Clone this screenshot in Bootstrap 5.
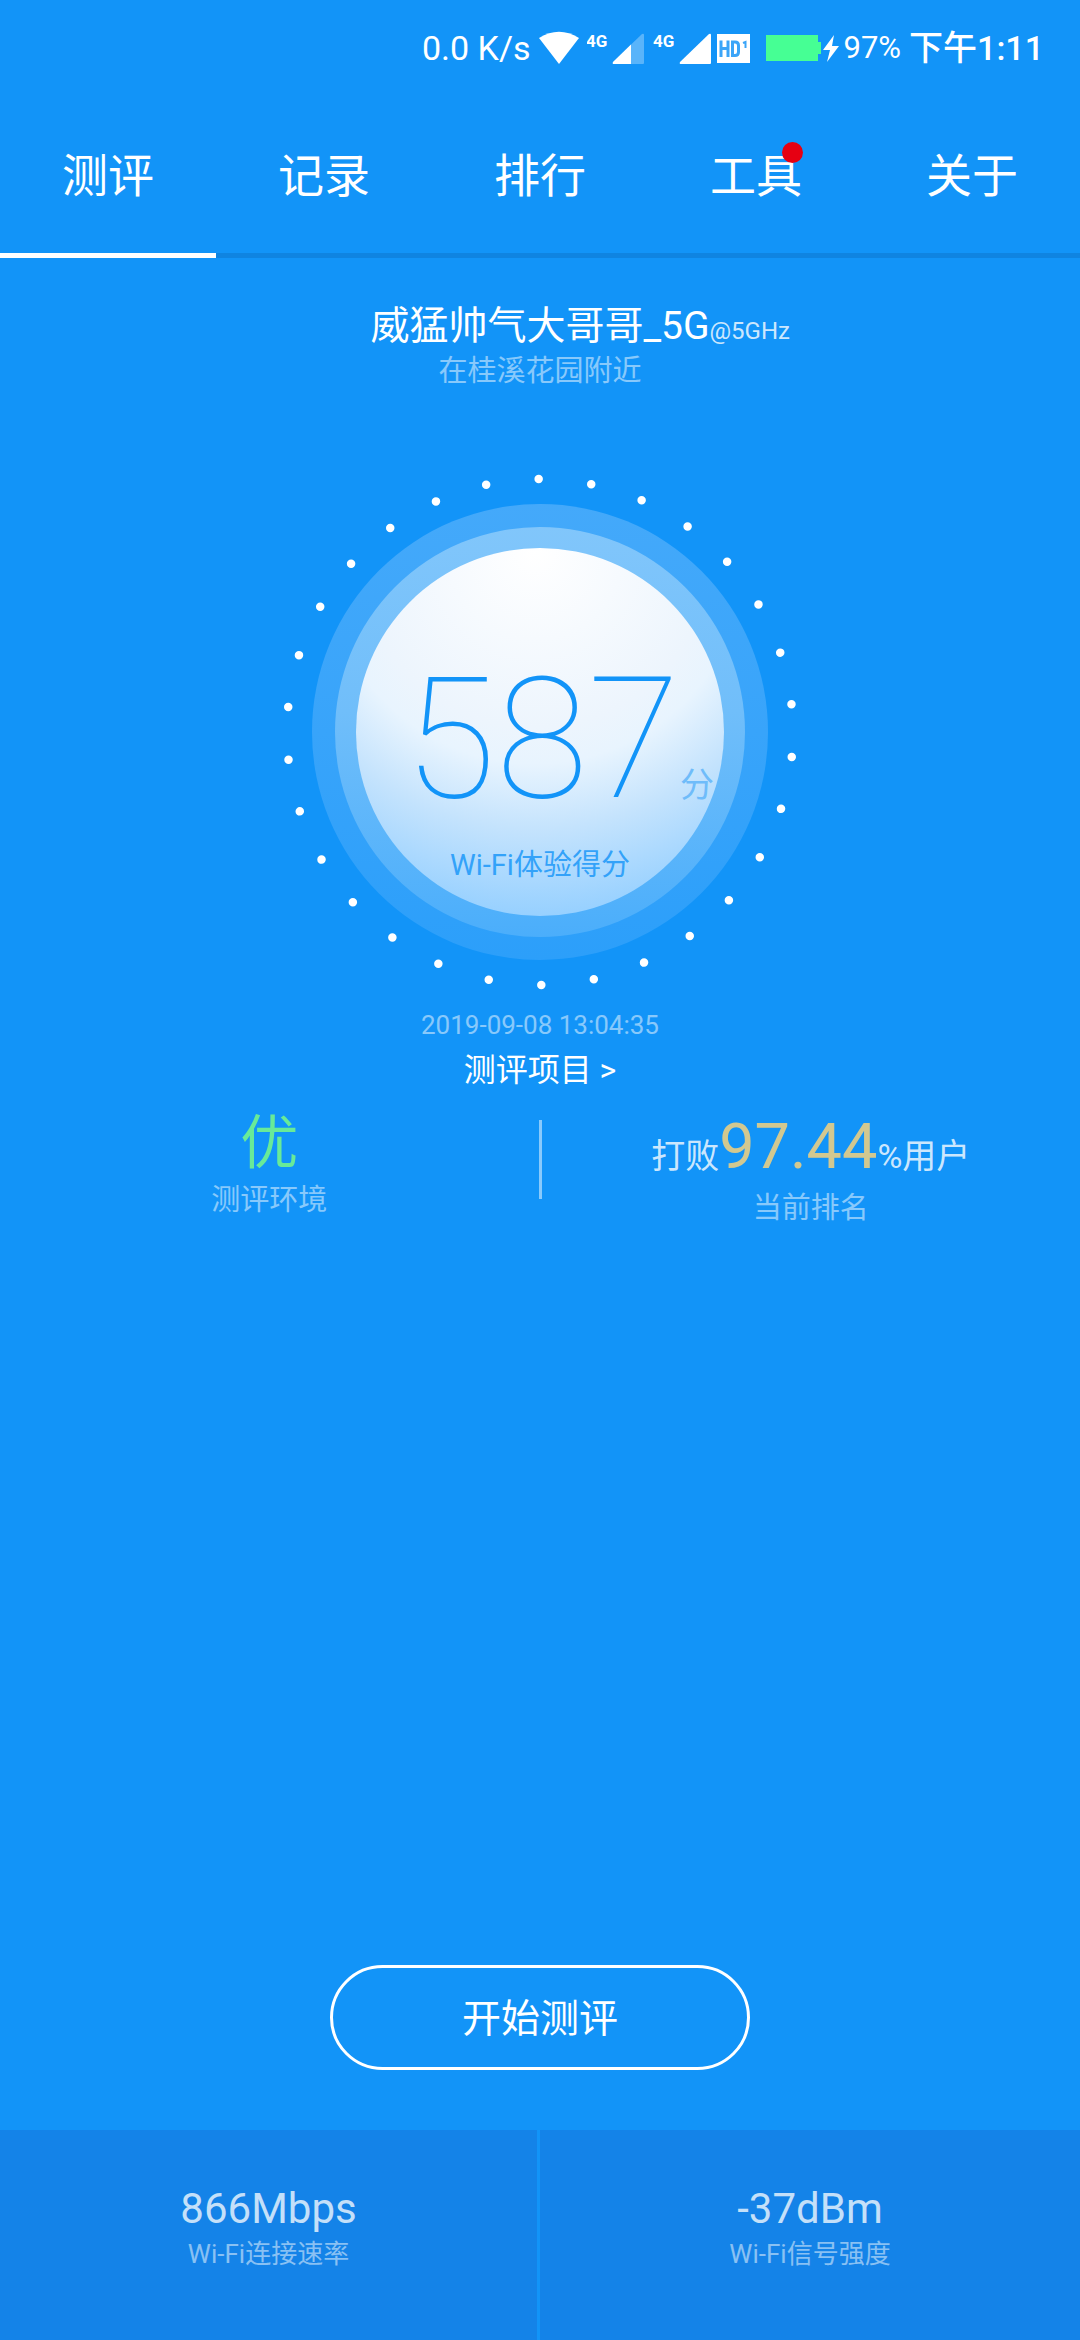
<!DOCTYPE html>
<html lang="zh-CN">
<head>
<meta charset="utf-8">
<meta name="viewport" content="width=device-width, initial-scale=1">
<title>Wi-Fi测评</title>
<link href="https://cdn.jsdelivr.net/npm/bootstrap@5.3.0/dist/css/bootstrap.min.css" rel="stylesheet">
<style>
  body { background: #1294f8; color: #fff; font-family: Roboto, "Noto Sans CJK SC", sans-serif; }
  a, a:hover { color: inherit; text-decoration: none; }
  .soft { color: rgba(255,255,255,.5); }
  .bright { color: rgba(255,255,255,.8); }

  /* status bar */
  .statusbar { height: 96px; padding: 0 36px; font-size: 34px; }
  .statusbar svg { display: block; flex: none; }
  .statusbar .clock { font-weight: 500; }
  .statusbar .charge { font-size: 31px; }
  .hd { margin-left: 6px; }

  /* tabs */
  .tabs .nav-link { padding: 50px 0 47px; border-bottom: 5px solid #0f84e1; border-radius: 0; color: #fff; font-size: 46px; line-height: 60px; font-weight: 400; }
  .tabs .nav-link.active { border-bottom-color: #fff; }
  .news-dot { position: absolute; top: -4px; right: -1px; width: 21px; height: 21px; border-radius: 50%; background: #e60012; }

  /* network name */
  .network { padding-top: 44px; }
  .side { flex: 1 1 0; min-width: 0; }
  .ssid { font-size: 39px; line-height: 48px; font-weight: 400; }
  .band { font-size: 24px; }
  .caption { font-size: 29px; line-height: 42px; }

  /* score gauge */
  .gauge { width: 530px; height: 530px; margin-top: 75px; padding-top: 201px; }
  .gauge svg { position: absolute; inset: 0; z-index: -1; }
  .score { padding-left: 4px; font-size: 168px; line-height: 144px; font-weight: 100; color: #1294f8; }
  .unit { font-size: 34px; line-height: 40px; color: #6fbcfa; }
  .score-label { margin-top: 32px; color: #33a2f9; }
  .stamp { margin-top: 10px; font-size: 26px; line-height: 36px; }
  .items { font-size: 32px; line-height: 54px; }

  /* result row */
  .results { padding-top: 10px; }
  .grade { font-size: 58px; line-height: 72px; color: #68ea98; }
  .rank { font-size: 34px; height: 80px; line-height: 80px; }
  .rank strong { font-size: 63px; font-weight: 400; color: #d2c890; }
  .rule { width: 3px; height: 79px; margin-top: 13px; background: rgba(255,255,255,.5); }

  .start { width: 420px; height: 105px; margin-bottom: 60px; padding: 2px 0 0; border: 3px solid #fff; font-size: 39px; line-height: 48px; color: #fff; }
  .start:hover { color: #fff; border-color: #fff; }

  /* link figures */
  .figures > div { padding: 55px 0 65px; background: #1483e8; }
  .figures > div:first-child { background-clip: padding-box; border-right: 3px solid transparent; }
  .figure-value { font-size: 42px; line-height: 48px; color: rgba(255,255,255,.75); }
  .figure-label { font-size: 26px; line-height: 42px; }
</style>
<script src="https://cdn.jsdelivr.net/npm/bootstrap@5.3.0/dist/js/bootstrap.bundle.min.js"></script>
</head>
<body class="d-flex flex-column min-vh-100">

<header>
  <div class="statusbar d-flex align-items-center justify-content-end">
    <span>0.0 K/s</span>
    <svg class="ms-2" width="40" height="34" viewBox="0 0 40 34" aria-hidden="true"><path d="M0 7Q20-5.500 40 7L20 33Z" fill="#fff"/></svg>
    <svg class="ms-2" width="58" height="34" viewBox="0 0 58 34" aria-hidden="true"><text x="-1" y="16" font-size="17" font-weight="700" fill="#fff">4G</text><path d="M27 33Q25 33 26 31L55 3Q57 2 57 4V32Q57 33 56 33Z" fill="#fff" opacity=".3"/><path d="M27 33Q25 33 26 31L44 13.500V33Z" fill="#fff"/></svg>
    <svg class="ms-2" width="58" height="34" viewBox="0 0 58 34" aria-hidden="true"><text x="0" y="16" font-size="17" font-weight="700" fill="#fff">4G</text><path d="M28 33Q26 33 27 31L56 3Q58 2 58 4V32Q58 33 57 33Z" fill="#fff"/></svg>
    <svg class="hd" width="33" height="29" viewBox="0 0 33 29" aria-hidden="true"><rect width="33" height="29" fill="#fff"/><g fill="none" stroke="#3ba5f8" stroke-width="3"><path d="M4 6.500V23M11 6.500V23M4 14.500H11M15.500 8V21.500H18Q21.500 21.500 21.500 18V11.500Q21.500 8 18 8Z"/><path stroke-width="2" d="M26 9L28.500 8V14"/></g></svg>
    <svg class="ms-3" width="78" height="30" viewBox="0 0 78 30" aria-hidden="true"><path d="M0 2H52V9H55V21H52V28H0Z" fill="#46ff94"/><path d="M68 2L57 17H64L61 29L73 13H66Z" fill="#fff"/></svg>
    <span class="charge me-2">97%</span>
    <span class="clock">下午1:11</span>
  </div>

  <nav class="tabs nav nav-fill nav-justified">
    <a class="nav-item nav-link active" aria-current="page" href="#">测评</a>
    <a class="nav-item nav-link" href="#">记录</a>
    <a class="nav-item nav-link" href="#">排行</a>
    <a class="nav-item nav-link" href="#"><span class="position-relative d-inline-block">工具<span class="news-dot"></span></span></a>
    <a class="nav-item nav-link" href="#">关于</a>
  </nav>
</header>

<main class="flex-grow-1 d-flex flex-column align-items-center">
  <section class="network w-100 text-center">
    <div class="d-flex align-items-baseline">
      <span class="side"></span>
      <h1 class="ssid m-0">威猛帅气大哥哥_5G</h1>
      <span class="side band text-start bright">@5GHz</span>
    </div>
    <div class="caption soft">在桂溪花园附近</div>
  </section>

  <section class="gauge position-relative z-0 text-center">
    <svg viewBox="0 0 530 530" aria-hidden="true">
      <defs>
        <linearGradient id="outer" x1="0" y1="0" x2="0" y2="1"><stop offset="0" stop-color="#44a9fa"/><stop offset="1" stop-color="#2c9ffa"/></linearGradient>
        <linearGradient id="middle" x1="0" y1="0" x2="0" y2="1"><stop offset="0" stop-color="#81c6fb"/><stop offset=".45" stop-color="#70befa"/><stop offset="1" stop-color="#4baefb"/></linearGradient>
        <radialGradient id="disc" gradientUnits="userSpaceOnUse" cx="260" cy="85" r="365"><stop offset="0" stop-color="#fff"/><stop offset=".48" stop-color="#edf5fd"/><stop offset=".58" stop-color="#e8f4fe"/><stop offset=".76" stop-color="#c4e3fd"/><stop offset="1" stop-color="#96d0ff"/></radialGradient>
      </defs>
      <circle cx="265" cy="265" r="253" fill="none" stroke="#fff" stroke-width="8.500" stroke-linecap="round" pathLength="30" stroke-dasharray="0 1" transform="rotate(-90.300 265 265)"/>
      <circle cx="265" cy="265" r="228" fill="url(#outer)"/>
      <circle cx="265" cy="265" r="205" fill="url(#middle)"/>
      <circle cx="265" cy="265" r="184" fill="url(#disc)"/>
    </svg>
    <div class="d-flex align-items-baseline">
      <span class="side"></span>
      <span class="score">587</span>
      <span class="side unit text-start">分</span>
    </div>
    <div class="score-label caption">Wi-Fi体验得分</div>
  </section>

  <time class="stamp soft" datetime="2019-09-08T13:04:35">2019-09-08 13:04:35</time>
  <a class="items" href="#">测评项目 &gt;</a>

  <section class="results w-100 d-flex text-center">
    <div class="side">
      <div class="grade">优</div>
      <div class="caption soft">测评环境</div>
    </div>
    <div class="rule"></div>
    <div class="side">
      <div class="rank d-flex align-items-baseline justify-content-center"><span class="bright">打败</span><strong>97.44</strong><span class="bright">%用户</span></div>
      <div class="caption soft">当前排名</div>
    </div>
  </section>

  <button type="button" class="start btn rounded-pill mt-auto">开始测评</button>
</main>

<footer class="figures d-flex text-center">
  <div class="w-50">
    <div class="figure-value">866Mbps</div>
    <div class="figure-label soft">Wi-Fi连接速率</div>
  </div>
  <div class="w-50">
    <div class="figure-value">-37dBm</div>
    <div class="figure-label soft">Wi-Fi信号强度</div>
  </div>
</footer>

</body>
</html>
